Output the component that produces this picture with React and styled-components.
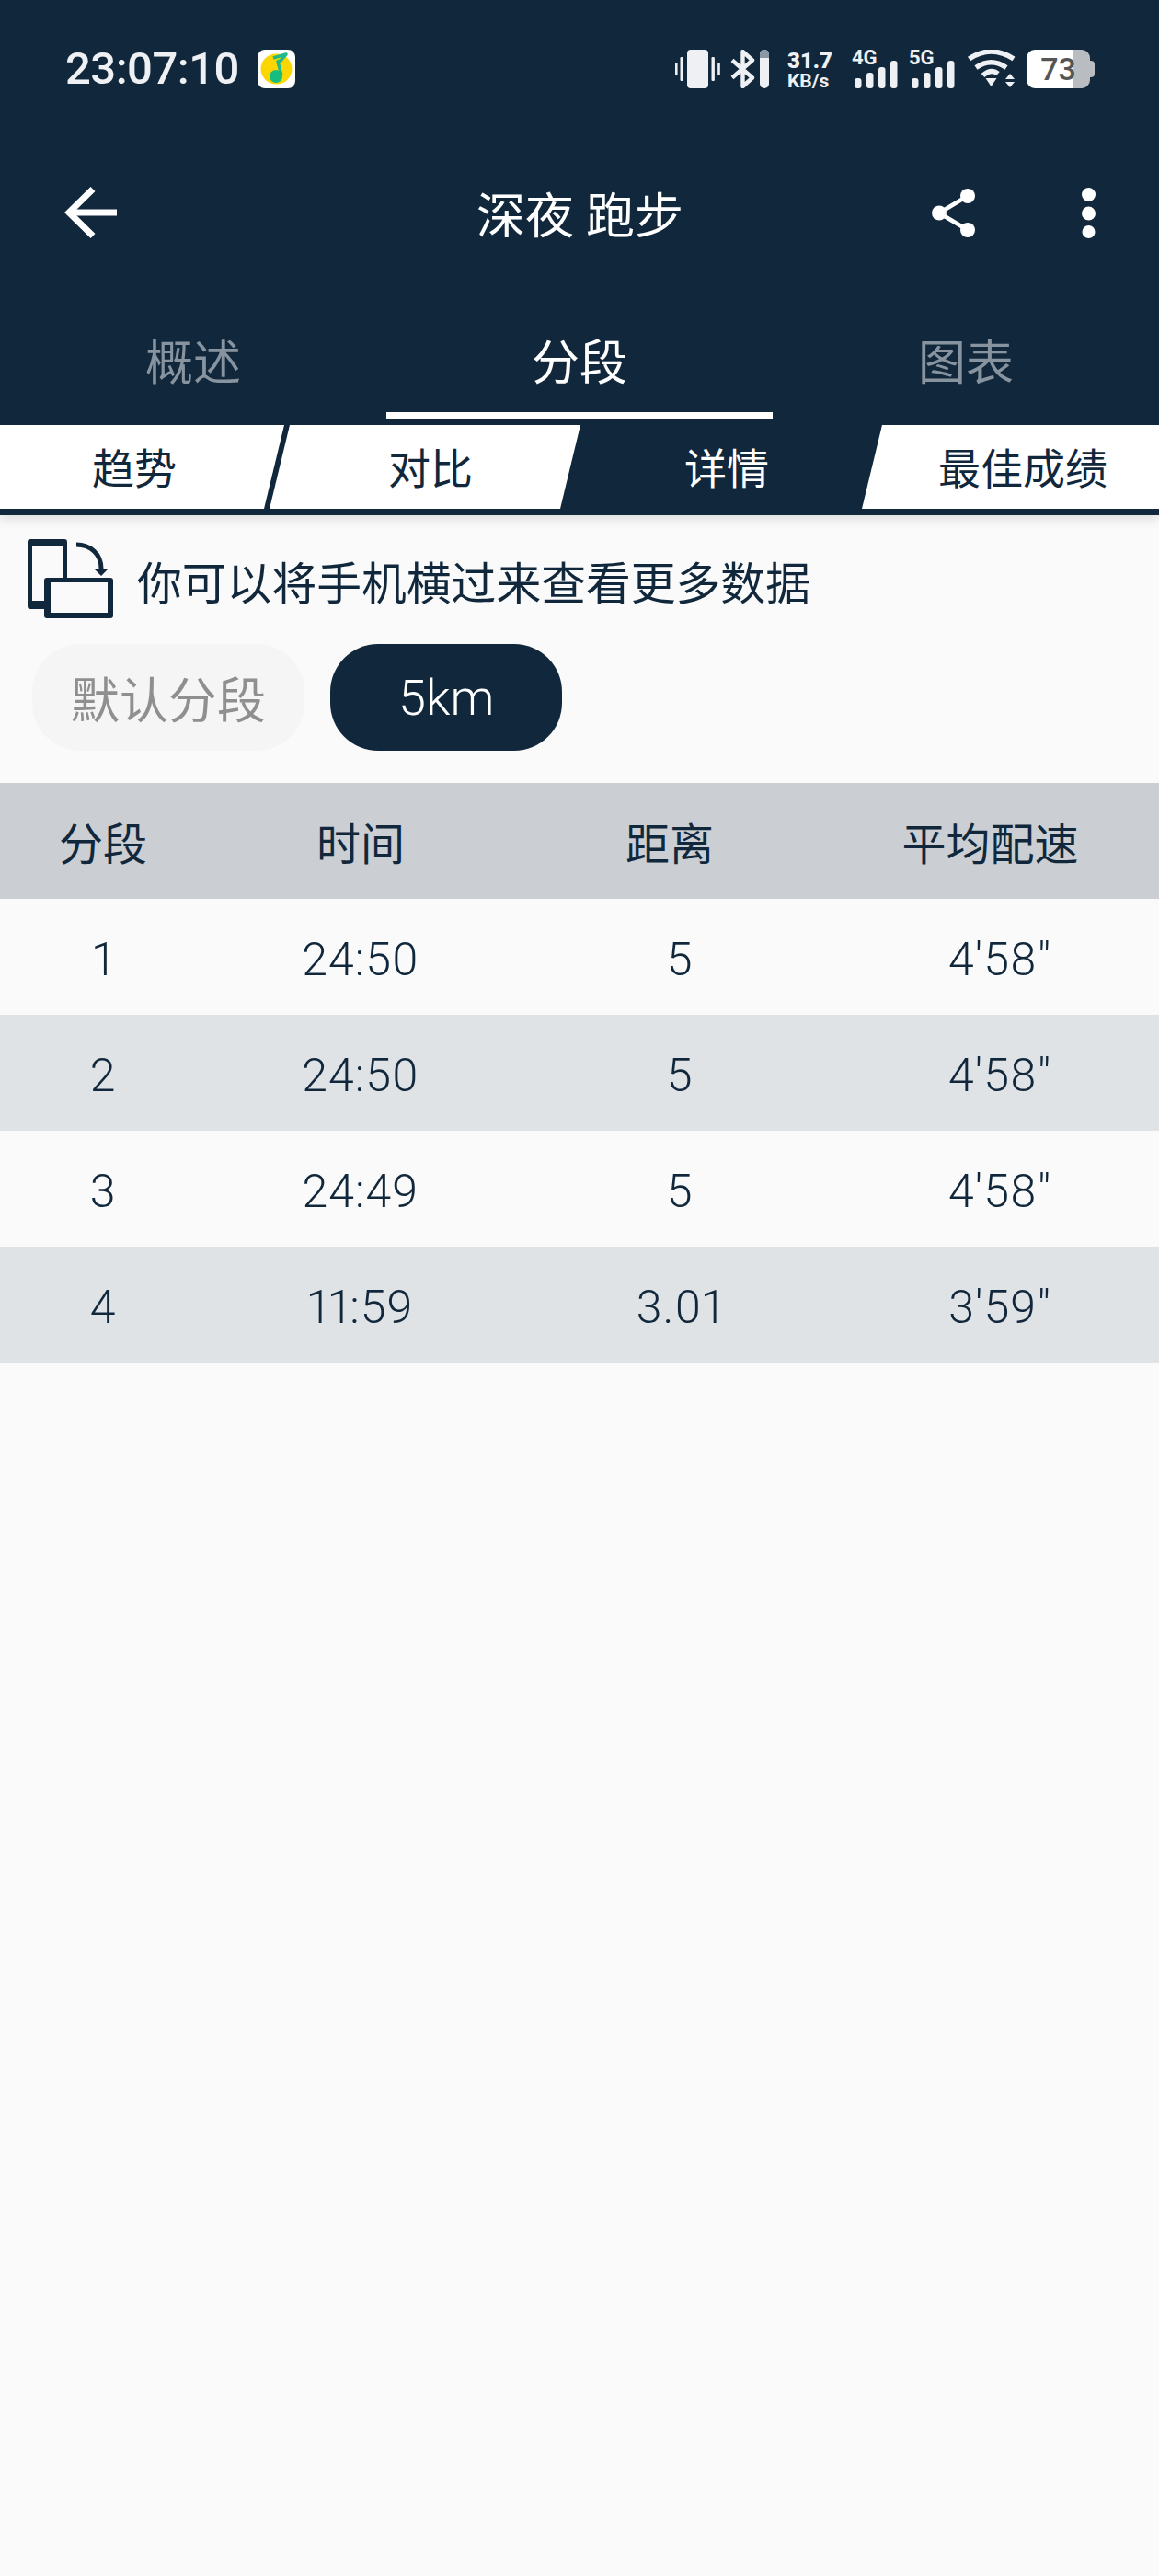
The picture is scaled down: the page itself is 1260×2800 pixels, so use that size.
import React from "react"
import styled, { createGlobalStyle } from "styled-components"

const navy = "#11283c"
const fonts = `Roboto, "Noto Sans CJK SC", sans-serif`

const GlobalStyle = createGlobalStyle`
    * {
        box-sizing: border-box;
    }
    body {
        margin: 0;
        background: #fafafa;
        font-family: ${fonts};
        color: ${navy};
    }
`

const Page = styled.div`
    width: 1260px;
    min-height: 2800px;
    background: #fafafa;
    overflow: hidden;
`
const Header = styled.header`
    background: ${navy};
    box-shadow: 0 4px 12px rgba(0, 0, 0, 0.13);
`
const StatusBar = styled.div`
    display: flex;
    align-items: flex-start;
    justify-content: space-between;
    height: 150px;
    padding: 54px 75px 0 71px;
    color: #eef0f3;
`
const StatusLeft = styled.div`
    display: flex;
    align-items: center;
    gap: 20px;
`
const Clock = styled.span`
    font-size: 49px;
    font-weight: 500;
    line-height: 42px;
    letter-spacing: -0.5px;
    color: #eef0f3;
`
const StatusRight = styled.div`
    display: flex;
    align-items: flex-start;
    height: 42px;
`
const Speed = styled.div`
    display: flex;
    flex-direction: column;
    width: 50px;
    margin: 0 20px 0 20px;
    font-weight: 700;
    b {
        font-size: 24px;
        line-height: 25px;
    }
    span {
        font-size: 21px;
        line-height: 18px;
        white-space: nowrap;
    }
`
const Signal = styled.div`
    position: relative;
    width: 50px;
    height: 42px;
    margin-right: ${(p) => p.$gap}px;
    span {
        position: absolute;
        left: 0;
        top: -3px;
        font-size: 22px;
        font-weight: 700;
        line-height: 24px;
    }
`
const Battery = styled.div`
    position: relative;
    display: flex;
    align-items: center;
    justify-content: center;
    width: 69px;
    height: 42px;
    margin-left: 12px;
    border-radius: 9px;
    background: linear-gradient(90deg, #ffffff 50px, #b9bdc2 50px);
    color: #555555;
    font-size: 34px;
    font-weight: 500;
    &::after {
        content: "";
        position: absolute;
        left: 69px;
        top: 12px;
        width: 5px;
        height: 18px;
        border-radius: 0 4px 4px 0;
        background: #b9bdc2;
    }
`
const Toolbar = styled.div`
    display: grid;
    grid-template-columns: 1fr auto 1fr;
    align-items: center;
    height: 160px;
    padding: 2px 69px 0 70px;
`
const Title = styled.h1`
    margin: 10px 0 0;
    color: #ffffff;
    font-size: 53px;
    font-weight: 400;
    line-height: 60px;
`
const ToolGroup = styled.div`
    display: flex;
    align-items: center;
    justify-content: flex-end;
    gap: 116px;
`
const Tabs = styled.div`
    display: grid;
    grid-template-columns: repeat(3, 420px);
`
const Tab = styled.div`
    height: 145px;
    padding-top: 59px;
    text-align: center;
    font-size: 52px;
    line-height: 54px;
    color: ${(p) => (p.$active ? "#ffffff" : "#87939f")};
    border-bottom: 7px solid ${(p) => (p.$active ? "#ffffff" : "transparent")};
`
const SubTabs = styled.div`
    display: flex;
    gap: 6px;
    padding: 7px 0;
    margin-left: -18px;
`
const SubTab = styled.div`
    position: relative;
    z-index: 0;
    flex: 0 0 ${(p) => (p.$last ? 350 : 316)}px;
    height: 91px;
    padding: 3px ${(p) => (p.$last ? 34 : 0)}px 0 12px;
    text-align: center;
    font-size: 46px;
    line-height: 91px;
    color: ${(p) => (p.$active ? "#ffffff" : navy)};
    &::before {
        content: "";
        position: absolute;
        inset: 0;
        z-index: -1;
        background: ${(p) => (p.$active ? navy : "#ffffff")};
        transform: skewX(-13.6deg);
    }
`
const Hint = styled.div`
    display: flex;
    align-items: center;
    gap: 26px;
    height: 112px;
    padding: 26px 0 0 30px;
    font-size: 48.8px;
`
const HintText = styled.span`
    margin-top: 13px;
    line-height: 70px;
`
const Chips = styled.div`
    display: flex;
    gap: 28px;
    padding: 28px 0 35px 35px;
`
const Chip = styled.div`
    display: flex;
    align-items: center;
    height: 116px;
    padding: 0 ${(p) => p.$pad}px;
    border-radius: 52px;
    font-size: ${(p) => (p.$active ? 54 : 53)}px;
    font-weight: ${(p) => (p.$active ? 300 : 400)};
    background: ${(p) => (p.$active ? navy : "#f5f5f5")};
    color: ${(p) => (p.$active ? "#ffffff" : "#8f8f8f")};
`
const Row = styled.div`
    display: grid;
    grid-template-columns: ${(p) => p.$cols};
    height: 126px;
    align-items: center;
    text-align: center;
    background: ${(p) => p.$bg};
    font-size: 48px;
`
const DataRow = styled(Row)`
    padding-top: 6px;
    font-size: 50px;
    font-weight: 300;
    letter-spacing: 1px;
    font-variant-numeric: proportional-nums;
`

const headCols = "224px 336px 336px 361px"
const dataCols = "224px 336px 358px 338px"

const rows = [
    ["1", "24:50", "5", `4'58"`],
    ["2", "24:50", "5", `4'58"`],
    ["3", "24:49", "5", `4'58"`],
    ["4", "11:59", "3.01", `3'59"`],
]

const MusicIcon = () => (
    <svg width="41" height="42" viewBox="0 0 41 42">
        <rect width="41" height="42" rx="8" fill="#fff" />
        <ellipse cx="20.5" cy="21" rx="17" ry="16.5" fill="#fbd602" />
        <path d="M17 9 L31 5 L25 12 L22 13 L26 28" fill="none" stroke="#22b98a" strokeWidth="3.5" strokeLinejoin="round" />
        <circle cx="20" cy="29" r="7" fill="#17bd7f" />
    </svg>
)

const VibrateIcon = () => (
    <svg width="49" height="42" viewBox="0 0 49 42" fill="#eef0f3">
        <rect x="13" width="23" height="42" rx="4" />
        <rect y="14" width="2.6" height="14" rx="1" />
        <rect x="5.5" y="8" width="3.4" height="26" rx="1.2" />
        <rect x="39.5" y="8" width="3.4" height="26" rx="1.2" />
        <rect x="46.2" y="14" width="2.6" height="14" rx="1" />
    </svg>
)

const BluetoothIcon = () => (
    <svg width="42" height="42" viewBox="0 0 42 42" style={{ marginLeft: 11 }}>
        <path d="M2 11.5 L24 30.5 L13.5 40 V2 L24 11.5 L2 30.5" fill="none" stroke="#eef0f3" strokeWidth="4.4" strokeLinejoin="round" />
        <rect x="32" width="10" height="42" rx="5" fill="#eef0f3" />
        <path d="M32 9 V5 a5 5 0 0 1 10 0 V9 Z" fill="#8a97a4" />
    </svg>
)

const SignalBars = () => (
    <svg width="50" height="42" viewBox="0 0 50 42" fill="#eef0f3">
        <rect x="3" y="31" width="7.5" height="11" rx="3" />
        <rect x="16" y="25" width="7.5" height="17" rx="3" />
        <rect x="29" y="19" width="7.5" height="23" rx="3" />
        <rect x="42" y="12" width="7.5" height="30" rx="3" />
    </svg>
)

const WifiIcon = () => (
    <svg width="52" height="42" viewBox="0 0 52 42">
        <g fill="none" stroke="#eef0f3" strokeWidth="5.4">
            <path d="M1.5 10 Q25.5 -6 50 10" />
            <path d="M9 19.5 Q25.5 8 42 19.5" />
            <path d="M16.5 28 Q25.5 20 33 26" />
        </g>
        <g fill="#eef0f3">
            <path d="M19.5 31 H31.5 L25.5 40 Z" />
            <path d="M46 26 L51 32 H41 Z" />
            <path d="M41 35 H51 L46 41 Z" />
        </g>
    </svg>
)

const BackIcon = () => (
    <svg width="57" height="56" viewBox="0 0 57 56" fill="none" stroke="#fff" strokeWidth="7">
        <path d="M31 2.5 L5 28 L31 53.5" />
        <path d="M5 28 H57" />
    </svg>
)

const ShareIcon = () => (
    <svg width="47" height="53" viewBox="0 0 47 53" fill="#fff">
        <path d="M8 26.5 L39 8 M8 26.5 L39 45" stroke="#fff" strokeWidth="4.5" />
        <circle cx="8" cy="26.5" r="8" />
        <circle cx="39" cy="8" r="8" />
        <circle cx="39" cy="45" r="8" />
    </svg>
)

const MoreIcon = () => (
    <svg width="15" height="55" viewBox="0 0 15 55" fill="#fff">
        <circle cx="7.5" cy="7.5" r="7.5" />
        <circle cx="7.5" cy="28" r="7.5" />
        <circle cx="7.5" cy="48" r="7" />
    </svg>
)

const RotateIcon = () => (
    <svg width="93" height="86" viewBox="0 0 93 86">
        <rect width="43" height="76" rx="3" fill={navy} />
        <rect x="5" y="7" width="33.5" height="60" fill="#fafafa" />
        <rect x="18" y="42" width="75" height="44" rx="3" fill={navy} />
        <rect x="25" y="47" width="62" height="33" fill="#fafafa" />
        <path d="M53 6 C68 6 80 16 80 32" fill="none" stroke={navy} strokeWidth="5" />
        <path d="M72 32 H88 L80 40 Z" fill={navy} />
    </svg>
)

const App = () => {
    return (
        <Page>
            <GlobalStyle />
            <Header>
                <StatusBar>
                    <StatusLeft>
                        <Clock>23:07:10</Clock>
                        <MusicIcon />
                    </StatusLeft>
                    <StatusRight>
                        <VibrateIcon />
                        <BluetoothIcon />
                        <Speed>
                            <b>31.7</b>
                            <span>KB/s</span>
                        </Speed>
                        <Signal $gap={12}>
                            <span>4G</span>
                            <SignalBars />
                        </Signal>
                        <Signal $gap={14}>
                            <span>5G</span>
                            <SignalBars />
                        </Signal>
                        <WifiIcon />
                        <Battery>73</Battery>
                    </StatusRight>
                </StatusBar>
                <Toolbar>
                    <BackIcon />
                    <Title>深夜 跑步</Title>
                    <ToolGroup>
                        <ShareIcon />
                        <MoreIcon />
                    </ToolGroup>
                </Toolbar>
                <Tabs>
                    <Tab>概述</Tab>
                    <Tab $active>分段</Tab>
                    <Tab>图表</Tab>
                </Tabs>
                <SubTabs>
                    <SubTab>趋势</SubTab>
                    <SubTab>对比</SubTab>
                    <SubTab $active>详情</SubTab>
                    <SubTab $last>最佳成绩</SubTab>
                </SubTabs>
            </Header>
            <Hint>
                <RotateIcon />
                <HintText>你可以将手机横过来查看更多数据</HintText>
            </Hint>
            <Chips>
                <Chip $pad={42}>默认分段</Chip>
                <Chip $active $pad={74}>5km</Chip>
            </Chips>
            <Row $cols={headCols} $bg="#cbced3">
                <span>分段</span>
                <span>时间</span>
                <span>距离</span>
                <span>平均配速</span>
            </Row>
            {rows.map((row, i) => (
                <DataRow key={row[0]} $cols={dataCols} $bg={i % 2 ? "#e0e3e6" : "#fafafa"}>
                    {row.map((cell, j) => (
                        <span key={j}>{cell}</span>
                    ))}
                </DataRow>
            ))}
        </Page>
    )
}

export default App
